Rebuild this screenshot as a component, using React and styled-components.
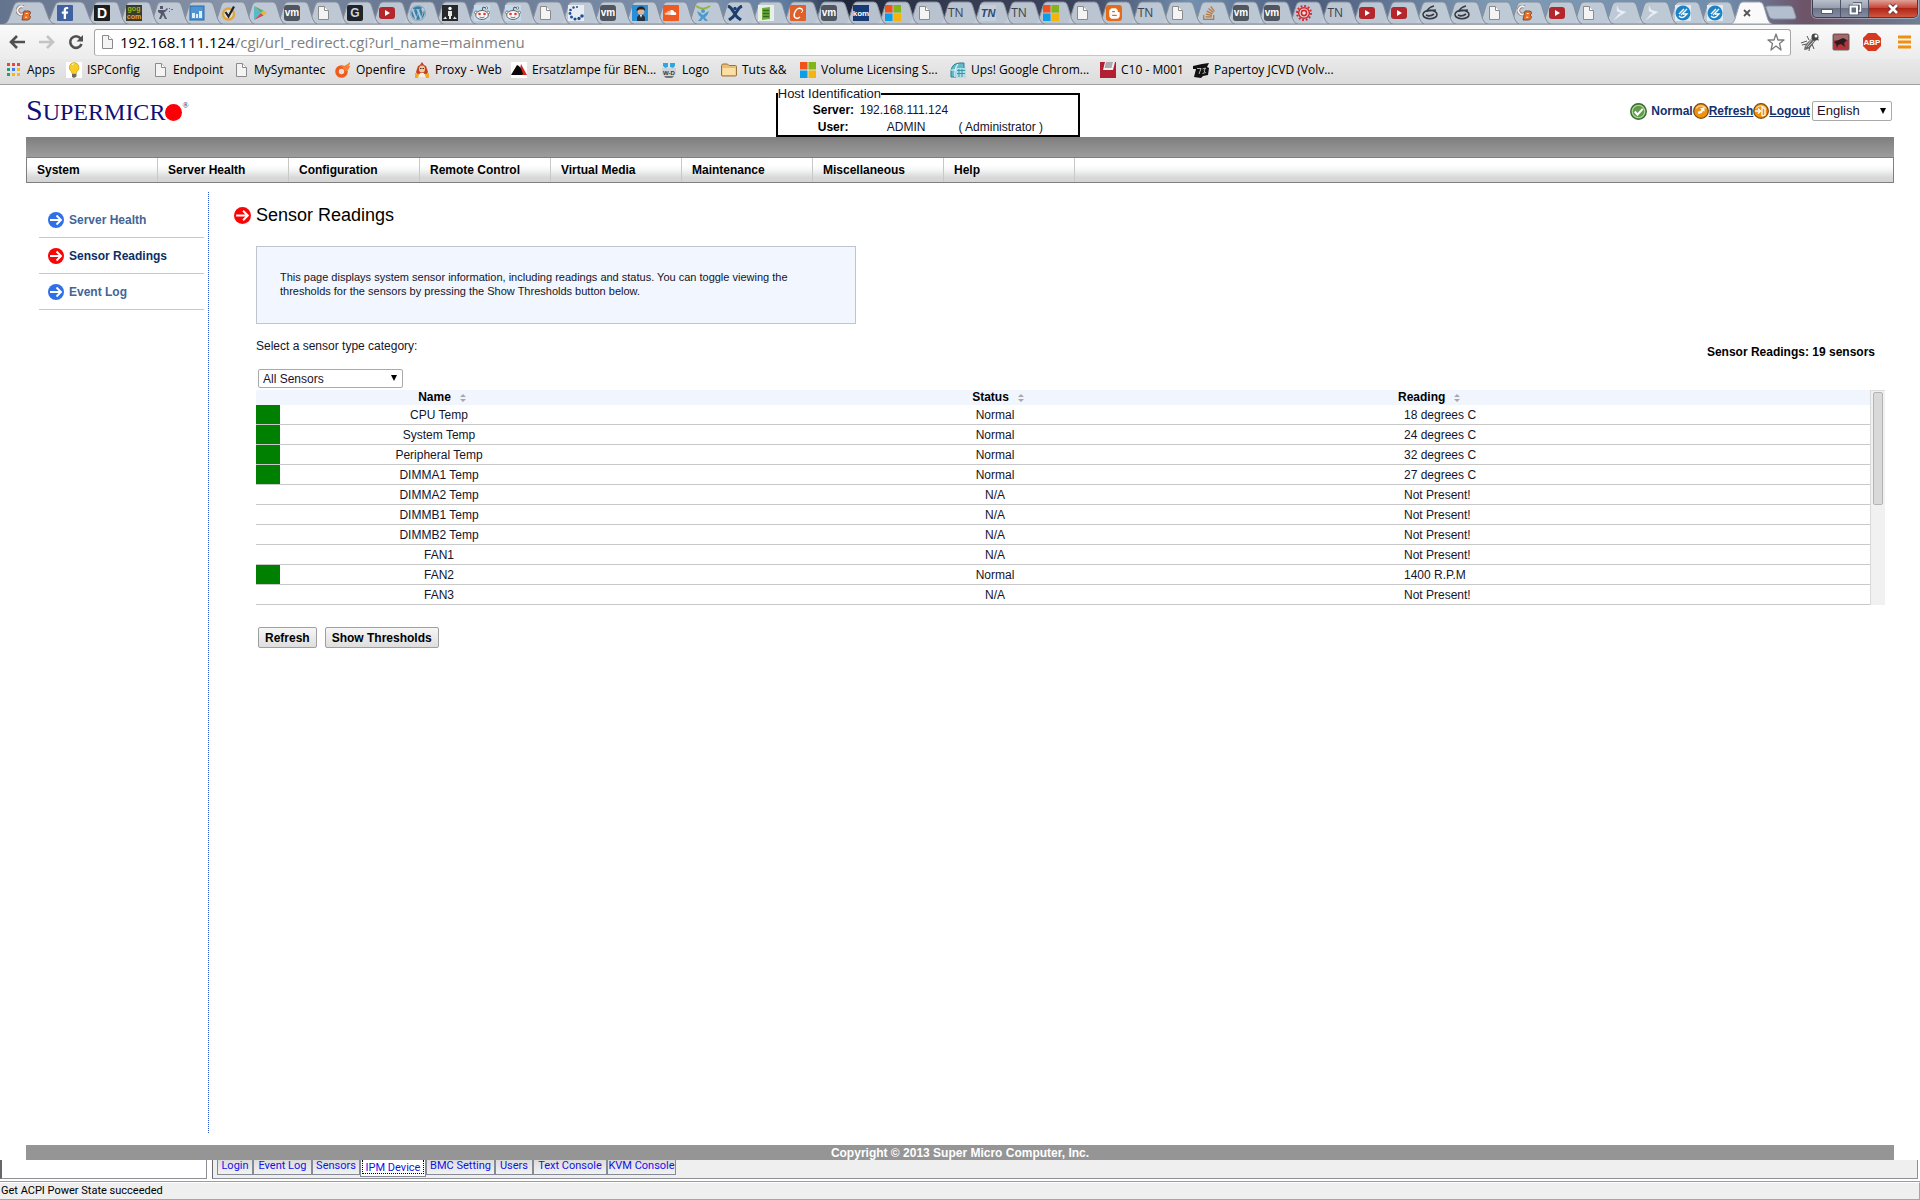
import { useState } from "react";
import styled, { createGlobalStyle } from "styled-components";
import {
  FaFacebookF,
  FaWordpress,
  FaSoundcloud,
  FaBloggerB,
  FaStackOverflow,
} from "react-icons/fa";

const GlobalStyle = createGlobalStyle`
  * {
    box-sizing: border-box;
  }
  body {
    margin: 0;
    background: #ffffff;
    color: #000000;
    font-family: "Liberation Sans", Arial, sans-serif;
    font-size: 12px;
    line-height: 14px;
  }
  button, input, select {
    font: inherit;
    color: inherit;
  }
  svg {
    display: block;
    flex: none;
  }
`;

/* ---------- favicons ---------- */

const Icon = ({ size = 16, children }) => (
  <svg width={size} height={size} viewBox="0 0 16 16" aria-hidden="true">
    {children}
  </svg>
);

const PageIcon = () => (
  <Icon>
    <path d="M3.5 1.5h6l4 4v9h-10z" fill="#f4f4f4" stroke="#8b8b8b" />
    <path d="M9.5 1.5v4h4" fill="#fff" stroke="#8b8b8b" />
  </Icon>
);

const LetterIcon = ({ bg, color = "#fff", text, size = 10, radius = 2, y = 11, slant }) => (
  <Icon>
    <rect width="16" height="16" rx={radius} fill={bg} />
    <text
      x="8"
      y={y}
      fill={color}
      fontFamily="Liberation Sans"
      fontWeight="bold"
      fontStyle={slant ? "italic" : "normal"}
      fontSize={size}
      textAnchor="middle"
    >
      {text}
    </text>
  </Icon>
);

const TileIcon = ({ bg, color = "#fff", glyph: Glyph, size = 12, radius = 1 }) => (
  <Icon>
    <rect width="16" height="16" rx={radius} fill={bg} />
    <Glyph x={8 - size / 2} y={8 - size / 2} width={size} height={size} color={color} />
  </Icon>
);

const CbIcon = () => (
  <Icon>
    <path d="M7.500 2A4 4 0 1 0 8 8.500" fill="none" stroke="#8d7f80" strokeWidth="3.600" />
    <path d="M7.500 2A4 4 0 1 0 8 8.500" fill="none" stroke="#f6efec" strokeWidth="1.800" />
    <path
      d="M8 6h4.500q2.400.2 2 2.300-.3 1.200-1.400 1.700 1.600.8 1.200 2.600-.5 2.400-3 2.400H6z"
      fill="#e4712a"
      stroke="#85411f"
      strokeWidth=".9"
    />
    <path d="M9.800 8.500h1.900M9.200 12.200h1.900" stroke="#fff" strokeWidth="1.100" />
  </Icon>
);

const RedditIcon = () => (
  <Icon>
    <rect width="16" height="16" fill="#c3d9ee" />
    <path d="M8 6l1-4 3 1" fill="none" stroke="#555" />
    <circle cx="12.500" cy="3" r="1.200" fill="#fff" stroke="#555" strokeWidth=".7" />
    <circle cx="2" cy="7.500" r="1.500" fill="#fff" stroke="#555" strokeWidth=".7" />
    <circle cx="14" cy="7.500" r="1.500" fill="#fff" stroke="#555" strokeWidth=".7" />
    <ellipse cx="8" cy="10" rx="6.300" ry="4.500" fill="#f7f7f7" stroke="#555" strokeWidth=".9" />
    <circle cx="5.500" cy="9" r="1.300" fill="#e0382b" />
    <circle cx="10.500" cy="9" r="1.300" fill="#e0382b" />
    <path d="M5.500 12q2.500 1.500 5 0" fill="none" stroke="#555" strokeWidth=".8" />
  </Icon>
);

const GogIcon = () => (
  <Icon>
    <rect width="16" height="16" fill="#3a3b2e" />
    <g fontFamily="Liberation Sans" fontWeight="bold" fontSize="7" textAnchor="middle">
      <text x="8" y="6" fill="#a6b51d">gog</text>
      <text x="8" y="14" fill="#e0a92e">com</text>
    </g>
  </Icon>
);

const SoldierIcon = () => (
  <Icon>
    <path
      d="M3 1h3v3H3zM1 5h7l2-2 1 1-3 3H7l1 3 2 4H8l-2-4-2 4H2l2-5-3-2z"
      fill="#55586b"
    />
    <path d="M12 3h1v1h-1zM14 4h2v1h-2zM12 6h1v1h-1z" fill="#c44" />
  </Icon>
);

const ChartIcon = () => (
  <Icon>
    <rect x="1" y="1" width="14" height="14" fill="#4f94d2" stroke="#2c69a5" />
    <path d="M3 13V8h3v5zM7 13V9h2v4zM10 13V6h3v7z" fill="#dceefa" />
  </Icon>
);

const CheckRingIcon = () => (
  <Icon>
    <circle cx="7.5" cy="9" r="5.5" fill="#dce1e6" stroke="#e0a63a" strokeWidth="2.4" />
    <path d="M4.5 7l3 4.5L13 1.5" fill="none" stroke="#222" strokeWidth="2.2" />
  </Icon>
);

const PlayStoreIcon = () => (
  <Icon>
    <path d="M2 1v14l7-7z" fill="#58b9c9" />
    <path d="M2 1l7 7 2.5-2.5z" fill="#5fae70" />
    <path d="M2 15l7-7 2.5 2.5z" fill="#cd4a5c" />
    <path d="M11.5 5.500L15 8l-3.500 2.500L9 8z" fill="#e7b43e" />
  </Icon>
);

const YoutubeIcon = () => (
  <Icon>
    <rect y="2" width="16" height="12" rx="3" fill="#b3262b" />
    <path d="M6 5v6l5-3z" fill="#fff" />
  </Icon>
);

const PersonIcon = () => (
  <Icon>
    <rect width="16" height="16" fill="#26282c" />
    <circle cx="8" cy="3.500" r="1.700" fill="#fff" />
    <path d="M6 6h4v5H9v3H7v-3H6zM1 14l2.500-2.500L5 14zM15 14l-2.500-2.500L11 14z" fill="#e6e6e6" />
  </Icon>
);

const DotsIcon = () => (
  <Icon>
    <rect width="16" height="16" fill="#e9edf2" />
    <g fill="#204f9c">
      <circle cx="9" cy="2" r="1" />
      <circle cx="5.500" cy="2.500" r="1.200" />
      <circle cx="2.500" cy="5" r="1.300" />
      <circle cx="2" cy="8.500" r="1.400" />
      <circle cx="3.500" cy="12" r="1.500" />
      <circle cx="7" cy="14" r="1.600" />
      <circle cx="11" cy="13.500" r="1.700" />
      <circle cx="14" cy="11" r="1.800" />
    </g>
  </Icon>
);

const BoyIcon = () => (
  <Icon>
    <rect width="16" height="16" fill="#2b8fd8" />
    <path d="M5 16v-4l2-2h4l2 2v4z" fill="#26323f" />
    <circle cx="9" cy="6.500" r="3.300" fill="#e3b293" />
    <path d="M4.500 6q0-4.500 4.500-4.500T13 6l-1.500-1.500H7.500z" fill="#2a211f" />
    <path d="M8 10h2l-1 3z" fill="#fff" />
  </Icon>
);

const JiraIcon = () => (
  <Icon>
    <path d="M1 1q7 5 14 0" fill="none" stroke="#8fb53a" strokeWidth="1.700" />
    <circle cx="8" cy="6" r="2" fill="#4c9bd0" />
    <path d="M2 6q4 2 6 4 2-2 6-4-1 4-4 6.500l3 3.500H10L8 13.500 6 16H3l3-3.500Q3 10 2 6z" fill="#4c9bd0" />
  </Icon>
);

const XManIcon = () => (
  <Icon>
    <path d="M1 1q3 1 5 5l4 6 4 3M15 1q-3 1-5 5l-4 6-4 3" fill="none" stroke="#1d3f70" strokeWidth="3" />
    <circle cx="8" cy="3.500" r="1.700" fill="#1d3f70" />
  </Icon>
);

const ServerIcon = () => (
  <Icon>
    <rect width="16" height="16" fill="#e8efe4" />
    <path d="M4 3l8-1v12l-8 1z" fill="#6fae3c" />
    <path d="M5 5.500h6M5 8.500h6M5 11.500h6" stroke="#2f6b1f" strokeWidth="1.300" />
  </Icon>
);

const SwirlIcon = () => (
  <Icon>
    <rect width="16" height="16" rx="1" fill="#e0602a" />
    <path d="M12.500 4.500Q8 1.500 5.500 6T5 12.500Q7 14.500 10 12" fill="none" stroke="#fff" strokeWidth="1.500" />
    <path d="M12.500 4.500Q13 7 11 8" fill="none" stroke="#fff" />
  </Icon>
);

const WindowsIcon = () => (
  <Icon>
    <path d="M0 0h7.500v7.500H0z" fill="#f1511b" />
    <path d="M8.500 0H16v7.500H8.500z" fill="#80b615" />
    <path d="M0 8.500h7.500V16H0z" fill="#0b9fe8" />
    <path d="M8.500 8.500H16V16H8.500z" fill="#f5b40c" />
  </Icon>
);

const GearIcon = () => (
  <Icon>
    <circle cx="8" cy="8" r="7" fill="none" stroke="#d0282c" strokeWidth="2" strokeDasharray="1.800 1.865" />
    <circle cx="8" cy="8" r="5.300" fill="#e9e4e8" stroke="#d0282c" strokeWidth="1.500" />
    <circle cx="8" cy="8" r="2.600" fill="none" stroke="#d0282c" strokeWidth="1.600" />
  </Icon>
);

const RingIcon = () => (
  <Icon>
    <ellipse cx="8" cy="9.500" rx="7" ry="4.300" fill="none" stroke="#363b41" strokeWidth="1.600" />
    <path d="M12 1Q7 2 5 6l9-1M4 10q4 2 8-1" fill="none" stroke="#363b41" strokeWidth="1.700" />
  </Icon>
);

const BoltIcon = () => (
  <Icon>
    <path d="M5 1l2 4 7 2-5 3-7 5 4-5 3-2-4-2z" fill="#eef1f4" stroke="#dde2e8" strokeWidth=".5" />
  </Icon>
);

const BlueHandIcon = () => (
  <Icon>
    <rect width="16" height="16" fill="#dfeaf3" />
    <circle cx="8" cy="8" r="7.500" fill="#1c82c4" />
    <path d="M4 9l5-5M6 10l6-6M4 11q3 3 6 0l2-2H8" fill="none" stroke="#fff" strokeWidth="1.300" />
  </Icon>
);

const AppsIcon = () => (
  <Icon>
    <path d="M1 1h3v3H1zM6 1h3v3H6zM11 1h3v3h-3z" fill="#e8453c" />
    <path d="M1 6h3v3H1zM1 11h3v3H1z" fill="#1fa463" />
    <path d="M6 6h3v3H6z" fill="#3b7ded" />
    <path d="M6 11h3v3H6zM11 6h3v3h-3zM11 11h3v3h-3z" fill="#f9b51e" />
  </Icon>
);

const BulbIcon = () => (
  <Icon>
    <rect width="16" height="16" fill="#fff" />
    <path d="M8 0.500a5 5 0 0 1 3 9l-.6 2H6l-.7-2A5 5 0 0 1 8 .5z" fill="#f7cf23" stroke="#c9920f" strokeWidth=".6" />
    <path d="M6 12h4.500v2.500L8 16l-2-1z" fill="#6d6a5e" />
    <path d="M6 3q1-1.500 2-1.200" stroke="#fffbd0" fill="none" strokeWidth="1.200" />
  </Icon>
);

const OpenfireIcon = () => (
  <Icon>
    <circle cx="6.500" cy="9.500" r="4.500" fill="none" stroke="#f15a1f" strokeWidth="3.600" />
    <path d="M6 4q4 1 9-4 .5 2-1.500 4 1.500 0 2-.5-1 3.500-4.500 6z" fill="#f58233" />
  </Icon>
);

const ProxyIcon = () => (
  <Icon>
    <path d="M8 0l2 3 2 1 1 3 1 3-1 2H3L2 10l1-3 1-3 2-1z" fill="#c9401c" />
    <ellipse cx="8" cy="7" rx="3" ry="3.500" fill="#f6c8a0" />
    <path d="M1 11l4 1-1 4H1zM15 11l-4 1 1 4h3z" fill="#f5a623" />
    <path d="M5 15l1-4h4l1 4z" fill="#f8efe4" />
    <path d="M6 6.500h1.500M8.500 6.500H10" stroke="#333" />
  </Icon>
);

const LampIcon = () => (
  <Icon>
    <rect width="16" height="16" fill="#fff" />
    <path d="M10 2l6 11H8z" fill="#d5281f" />
    <path d="M6 3q4 1 6 9l-1 1H0z" fill="#0a0a0a" />
  </Icon>
);

const WdIcon = () => (
  <Icon>
    <path d="M2 1h5v4l-3 1-2-2zM9 1h5v3l-2 2-3-1z" fill="#2ba9e0" />
    <path d="M1 6h14v6l-3 4H4l-3-4z" fill="#cfd3d6" />
    <path d="M3 14h10l-2 2H5z" fill="#6f777e" />
    <text x="8" y="12.500" fontFamily="Liberation Sans" fontWeight="bold" fontSize="6" fill="#333" textAnchor="middle">
      W-D
    </text>
  </Icon>
);

const FolderIcon = () => (
  <Icon>
    <path d="M.5 3.500l1-1.500h5l1.500 1.500h6.500q1 0 1 1V13q0 1-1 1h-13q-1 0-1-1z" fill="#e8bd74" stroke="#9b743a" />
    <path d="M1.500 6h13v7h-13z" fill="#fbdfa4" />
  </Icon>
);

const GlobeIcon = () => (
  <Icon>
    <path d="M1 15V9q1-8 9-8h4v14z" fill="#63b9cb" stroke="#2e7f93" />
    <path d="M1 8h7M8 2q-4 5-3 13" fill="none" stroke="#e6f7fa" strokeWidth="1.200" />
    <rect x="6" y="6" width="10" height="10" fill="#aee0ea" />
    <path d="M7 8.500h8M7 11.500h8M9 7v8M12 7v8" stroke="#3c93a6" />
  </Icon>
);

const C10Icon = () => (
  <Icon>
    <rect width="16" height="16" fill="#b21f33" />
    <path d="M5 0h10l-2 8H3z" fill="#f3f3f3" />
    <path d="M6 0h7l-1.500 6h-7z" fill="#a9acb0" />
  </Icon>
);

const PapertoyIcon = () => (
  <Icon>
    <path d="M0 4l9-2 7-1-2 4 2 1-1 7-5 1-2 2-7-1 2-8H0z" fill="#111" />
    <path d="M4 6.500h4L6 12M9.500 7l3-1-1.500 3 1.500 1.500-3 1" stroke="#ddd" fill="none" strokeWidth=".8" />
  </Icon>
);

const vm = <LetterIcon bg="#4f5660" text="vm" radius={3} />;
const page = <PageIcon />;
const youtube = <YoutubeIcon />;
const windows = <WindowsIcon />;

const tabs = [
  <CbIcon />,
  <TileIcon bg="#41609f" glyph={FaFacebookF} />,
  <LetterIcon bg="#1d1d1d" text="D" size={14} y={13} radius={1} />,
  <GogIcon />,
  <SoldierIcon />,
  <ChartIcon />,
  <CheckRingIcon />,
  <PlayStoreIcon />,
  vm,
  page,
  <LetterIcon bg="#202428" text="G" color="#cfd4d8" size={12} y={12} />,
  youtube,
  <FaWordpress size={16} color="#3580a8" />,
  <PersonIcon />,
  <RedditIcon />,
  <RedditIcon />,
  page,
  <DotsIcon />,
  vm,
  <BoyIcon />,
  <TileIcon bg="#ef5a23" glyph={FaSoundcloud} size={13} />,
  <JiraIcon />,
  <XManIcon />,
  <ServerIcon />,
  <SwirlIcon />,
  vm,
  <LetterIcon bg="#153a75" text="kom" size={8} radius={0} />,
  windows,
  page,
  "TN",
  <LetterIcon bg="#c5cfda" color="#2d4a72" text="TN" size={11} radius={0} y={12} slant />,
  "TN",
  windows,
  page,
  <TileIcon bg="#e36c1c" glyph={FaBloggerB} size={11} radius={3} />,
  "TN",
  page,
  <FaStackOverflow size={16} color="#b8783a" />,
  vm,
  vm,
  <GearIcon />,
  "TN",
  youtube,
  youtube,
  <RingIcon />,
  <RingIcon />,
  page,
  <CbIcon />,
  youtube,
  page,
  <BoltIcon />,
  <BoltIcon />,
  <BlueHandIcon />,
  <BlueHandIcon />,
];

/* ---------- browser window ---------- */

const TabStrip = styled.div`
  display: flex;
  height: 24px;
  padding-left: 4px;
  background: linear-gradient(
    90deg,
    #64738e 0%,
    #8793a8 12%,
    #64748f 22%,
    #7f93ae 36%,
    #5d7ba0 41%,
    #20263a 44%,
    #363c52 50%,
    #3c435c 56%,
    #7390b0 62%,
    #4a5a7a 68%,
    #7f9bb6 78%,
    #6f8cab 90%,
    #6d5367 94%,
    #6d7f96 100%
  );
`;

const Tab = styled.div`
  display: grid;
  flex: ${(p) => (p.$wide ? "0 0 41px" : "1 1 0")};
  min-width: 0;
  z-index: ${(p) => p.$layer};
  > * {
    grid-area: 1 / 1;
  }
`;

const TabShape = styled.svg`
  width: calc(100% + 10px);
  height: 24px;
`;

const TabContent = styled.span`
  align-self: center;
  padding: 2px 0 0 ${(p) => (p.$wide ? "12px" : "8px")};
  color: #3c414a;
  font: 12px/16px "Open Sans", sans-serif;
  z-index: 1;
`;

const CloseTab = styled.button`
  padding: 0;
  border: 0;
  background: none;
  display: grid;
  place-items: center;
  width: 16px;
  height: 16px;
`;

const StripEnd = styled.div`
  display: flex;
  justify-content: space-between;
  width: 158px;
  padding: 0 2px 0 3px;
`;

const NewTab = styled.button`
  margin-top: 5px;
  padding: 0;
  border: 0;
  background: none;
  height: 16px;
`;

const WindowButtons = styled.div`
  display: flex;
  height: 18px;
  border: 1px solid #39404f;
  border-top: 0;
  border-radius: 0 0 5px 5px;
  box-shadow: 0 0 0 1px rgba(255, 255, 255, 0.35);
  overflow: hidden;
`;

const WindowButton = styled.button`
  display: grid;
  place-items: center;
  width: ${(p) => (p.$close ? "48px" : "28px")};
  padding: 0;
  border: 0;
  border-right: ${(p) => (p.$close ? "0" : "1px solid #4b5365")};
  background: ${(p) =>
    p.$close
      ? "linear-gradient(#e0a197, #c5493a 45%, #b02517 50%, #d0573f)"
      : "linear-gradient(#b9bfca, #98a0af 45%, #6d7488 50%, #848ca2)"};
`;

const Toolbar = styled.div`
  display: flex;
  align-items: center;
  height: 35px;
  padding: 0 8px;
  border-top: 1px solid #a3a8ae;
  background: linear-gradient(#fafafa, #ececec);
`;

const NavButton = styled.button`
  padding: 0;
  border: 0;
  background: none;
  margin-right: ${(p) => p.$gap}px;
`;

const Omnibox = styled.div`
  flex: 1;
  display: flex;
  align-items: center;
  height: 27px;
  padding: 0 5px 0 4px;
  background: #ffffff;
  border: 1px solid #a6a6a6;
  border-bottom-color: #c6c6c6;
  border-radius: 3px;
`;

const Address = styled.div`
  flex: 1;
  padding-left: 5px;
  color: #808080;
  font: 15px/20px "Open Sans", sans-serif;
  b {
    font-weight: 400;
    color: #000000;
  }
`;

const Extensions = styled.div`
  display: flex;
  align-items: center;
  gap: 12px;
  padding-left: 9px;
`;

const Bookmarks = styled.nav`
  display: flex;
  align-items: center;
  height: 26px;
  padding: 0 0 3px 6px;
  border-bottom: 1px solid #a0a0a0;
  background: linear-gradient(#e9e9e9, #dcdcdc);
`;

const Bookmark = styled.a`
  display: flex;
  align-items: center;
  gap: 5px;
  flex: none;
  width: ${(p) => p.$width}px;
  color: #000000;
  font: 12px/16px "Open Sans", sans-serif;
  text-decoration: none;
  white-space: nowrap;
`;

const bookmarks = [
  { label: "Apps", width: 60, icon: <AppsIcon /> },
  { label: "ISPConfig", width: 86, icon: <BulbIcon /> },
  { label: "Endpoint", width: 81, icon: page },
  { label: "MySymantec", width: 102, icon: page },
  { label: "Openfire", width: 79, icon: <OpenfireIcon /> },
  { label: "Proxy - Web", width: 97, icon: <ProxyIcon /> },
  { label: "Ersatzlampe für BEN...", width: 150, icon: <LampIcon /> },
  { label: "Logo", width: 60, icon: <WdIcon /> },
  { label: "Tuts &&", width: 79, icon: <FolderIcon /> },
  { label: "Volume Licensing S...", width: 150, icon: windows },
  { label: "Ups! Google Chrom...", width: 150, icon: <GlobeIcon /> },
  { label: "C10 - M001", width: 93, icon: <C10Icon /> },
  { label: "Papertoy JCVD (Volv...", width: 150, icon: <PapertoyIcon /> },
];

const Shape = ({ active }) => (
  <TabShape viewBox="0 0 42 24" preserveAspectRatio="none" aria-hidden="true">
    <path
      d="M0 24Q3 23 4 19L8 6Q9 2 12 2H29Q32 2 33 6L37 19Q39 24 42 24z"
      fill={active ? "#fafafa" : "rgba(196,205,217,.93)"}
      stroke={active ? "#9aa2ad" : "#858d99"}
      vectorEffect="non-scaling-stroke"
    />
  </TabShape>
);

function Browser() {
  return (
    <header>
      <TabStrip>
        {tabs.map((content, i) => (
          <Tab key={i} $wide={i < 2} $layer={tabs.length - i}>
            <Shape />
            <TabContent $wide={i < 2}>{content}</TabContent>
          </Tab>
        ))}
        <Tab $layer={tabs.length + 1}>
          <Shape active />
          <TabContent>
            <CloseTab aria-label="Close tab">
              <svg width="8" height="8" viewBox="0 0 8 8">
                <path d="M1 1l6 6M7 1L1 7" stroke="#555" strokeWidth="1.800" />
              </svg>
            </CloseTab>
          </TabContent>
        </Tab>
        <StripEnd>
          <NewTab aria-label="New tab">
            <svg width="32" height="16" viewBox="0 0 32 16">
              <path d="M1 3Q0 1 3 1h22q2 0 3 2l3 9q0 2-2 2H8q-3 0-4-3z" fill="#b3bfcf" stroke="#8490a3" />
            </svg>
          </NewTab>
          <WindowButtons>
            <WindowButton aria-label="Minimize">
              <svg width="14" height="12" viewBox="0 0 14 12">
                <rect x="1.500" y="6.500" width="11" height="4" fill="#fff" stroke="#555d6e" />
              </svg>
            </WindowButton>
            <WindowButton aria-label="Restore">
              <svg width="14" height="14" viewBox="0 0 14 14">
                <path d="M5 2h7.500v7H10" fill="none" stroke="#454c5d" strokeWidth="3.400" />
                <path d="M5 2h7.500v7H10" fill="none" stroke="#fff" strokeWidth="1.700" />
                <rect x="2.500" y="4.500" width="6.500" height="7" fill="#666e80" stroke="#454c5d" strokeWidth="3.400" />
                <rect x="2.500" y="4.500" width="6.500" height="7" fill="#666e80" stroke="#fff" strokeWidth="2" />
              </svg>
            </WindowButton>
            <WindowButton $close aria-label="Close">
              <svg width="14" height="12" viewBox="0 0 14 12">
                <path d="M3 2l8 8M11 2l-8 8" stroke="#5c2a2a" strokeWidth="4.500" />
                <path d="M3 2l8 8M11 2l-8 8" stroke="#fff" strokeWidth="2.800" />
              </svg>
            </WindowButton>
          </WindowButtons>
        </StripEnd>
      </TabStrip>
      <Toolbar>
        <NavButton $gap={12} aria-label="Back">
          <svg width="18" height="16" viewBox="0 0 18 16">
            <path d="M9 2L3 8l6 6M3 8h14" fill="none" stroke="#505050" strokeWidth="2.600" />
          </svg>
        </NavButton>
        <NavButton $gap={12} aria-label="Forward">
          <svg width="18" height="16" viewBox="0 0 18 16">
            <path d="M9 2l6 6-6 6M15 8H1" fill="none" stroke="#c4c4c4" strokeWidth="2.600" />
          </svg>
        </NavButton>
        <NavButton $gap={10} aria-label="Reload">
          <svg width="16" height="16" viewBox="0 0 16 16">
            <path d="M12.500 4.300A5.800 5.800 0 1 0 13.500 10" fill="none" stroke="#505050" strokeWidth="2.600" />
            <path d="M15 1v6.500H8.500z" fill="#505050" />
          </svg>
        </NavButton>
        <Omnibox>
          <PageIcon />
          <Address>
            <b>192.168.111.124</b>/cgi/url_redirect.cgi?url_name=mainmenu
          </Address>
          <svg width="18" height="18" viewBox="0 0 18 18" aria-hidden="true">
            <path
              d="M9 1l2 6h6l-4.500 3.500L14 17l-5-4-5 4 1.500-6.500L1 7h6z"
              fill="#fff"
              stroke="#7c7c7c"
              strokeWidth="1.300"
              strokeLinejoin="round"
            />
          </svg>
        </Omnibox>
        <Extensions>
          <svg width="20" height="20" viewBox="0 0 20 20" aria-hidden="true">
            <path d="M7 9L1 11M7 12l-5 1M10 13l-1 6M12 12l2 5M9 8L7 4M13 6l0-4M14 7l5 1" stroke="#555" fill="none" />
            <path d="M13 5l3 3-6 8q-3 2-6 2 0-4 3-7z" fill="#6b6b6b" />
            <path d="M12 7l-6 8M14 9l-6 6" stroke="#d5d5d5" strokeWidth=".8" />
            <circle cx="15" cy="5" r="3.500" fill="#444" />
            <circle cx="16" cy="4" r="1.500" fill="#fff" />
          </svg>
          <svg width="18" height="18" viewBox="0 0 18 18" aria-hidden="true">
            <rect x="1" y="1" width="16" height="16" rx="1" fill="#b53238" stroke="#666" />
            <path d="M2 2h14v5H2z" fill="#9b6c6c" />
            <path d="M2 9l9-4 4 2-3 3 1 4-4-3-3 1-1 3-1-4z" fill="#2b1b1c" />
          </svg>
          <svg width="20" height="20" viewBox="0 0 20 20" aria-hidden="true">
            <path d="M6 1h8l5 5v8l-5 5H6l-5-5V6z" fill="#d6391d" />
            <text x="10" y="13" fontFamily="Liberation Sans" fontWeight="bold" fontSize="8" fill="#fff" textAnchor="middle">
              ABP
            </text>
          </svg>
          <svg width="18" height="14" viewBox="0 0 18 14" aria-hidden="true">
            <path d="M4 2h13M4 7h13M4 12h13" stroke="#f09010" strokeWidth="3" />
          </svg>
        </Extensions>
      </Toolbar>
      <Bookmarks>
        {bookmarks.map(({ label, width, icon }) => (
          <Bookmark key={label} href="#" $width={width}>
            {icon}
            {label}
          </Bookmark>
        ))}
      </Bookmarks>
    </header>
  );
}

/* ---------- IPMI page ---------- */

const Screen = styled.div`
  display: flex;
  flex-direction: column;
  min-height: 100vh;
`;

const Masthead = styled.div`
  display: grid;
  grid-template-columns: 48fr 304px 52fr;
  height: 52px;
  padding: 0 28px 0 26px;
`;

const Logo = styled.div`
  display: flex;
  align-items: baseline;
  align-self: center;
  color: #10107a;
  font: 24px/28px "Liberation Serif", serif;
`;

const LogoInitial = styled.span`
  font-size: 30px;
`;

const LogoDot = styled.svg`
  align-self: center;
  margin-top: 2px;
`;

const Registered = styled.span`
  align-self: flex-start;
  font-size: 8px;
  line-height: 20px;
`;

const HostBox = styled.fieldset`
  margin: 0;
  padding: 0;
  height: 52px;
  min-width: 0;
  border: 2px solid #000000;
  color: #14142a;
  legend {
    padding: 0;
    font-size: 13px;
    line-height: 17px;
  }
`;

const HostRow = styled.dl`
  display: flex;
  margin: 0;
  line-height: 17px;
  dt {
    width: 80px;
    padding-left: ${(p) => (p.$user ? "40px" : "35px")};
    font-weight: bold;
    color: #000000;
  }
  dd {
    margin: 0 0 0 ${(p) => (p.$user ? "29px" : "2px")};
  }
  dd + dd {
    margin-left: 33px;
  }
`;

const Session = styled.div`
  display: flex;
  align-items: center;
  justify-content: flex-end;
  height: 52px;
  color: #14306e;
  font-weight: bold;
  a {
    color: inherit;
  }
`;

const Health = styled.span`
  padding-left: 4px;
`;

const SelectWrap = styled.span`
  display: inline-grid;
  align-items: center;
  width: ${(p) => p.$width}px;
  margin-left: 2px;
  font-size: ${(p) => p.$size}px;
  font-weight: normal;
  > * {
    grid-area: 1 / 1;
  }
  select {
    appearance: none;
    width: 100%;
    height: ${(p) => p.$height}px;
    padding: 0 4px;
    border: 1px solid #a9a9a9;
    border-radius: 2px;
    background: #ffffff;
    color: #1c1030;
  }
  svg {
    justify-self: end;
    margin-right: 5px;
    pointer-events: none;
  }
`;

const Band = styled.div`
  height: 20px;
  margin: 0 26px;
  background: linear-gradient(#7e7e7e, #9d9d9d);
`;

const Menu = styled.nav`
  display: flex;
  height: 26px;
  margin: 0 26px;
  border: 1px solid #7f7f7f;
  background: linear-gradient(#ffffff 30%, #f4f5f5 50%, #d8d9d9 80%, #d4d4d4);
`;

const MenuLink = styled.a`
  width: 131px;
  padding-left: 10px;
  border-right: 1px solid #c8c8c8;
  color: #000000;
  font-weight: bold;
  line-height: 24px;
  text-decoration: none;
`;

const Body = styled.div`
  flex: 1;
  display: flex;
  padding: 9px 35px 12px 39px;
`;

const Sidebar = styled.nav`
  width: 170px;
  padding: 10px 4px 0 0;
  border-right: 1px dotted #2a52d8;
`;

const SideLink = styled.a`
  display: flex;
  align-items: center;
  gap: 5px;
  height: 36px;
  padding-left: 9px;
  border-bottom: 1px solid #c9c9c9;
  color: ${(p) => (p.$active ? "#0d2f63" : "#426596")};
  font-weight: bold;
  text-decoration: none;
`;

const Main = styled.main`
  flex: 1;
  min-width: 0;
  padding: 13px 0 0 25px;
`;

const Title = styled.h1`
  display: flex;
  align-items: center;
  gap: 5px;
  height: 20px;
  margin: 0;
  font-size: 18px;
  font-weight: normal;
`;

const Content = styled.div`
  padding-left: 22px;
`;

const Notice = styled.p`
  width: 600px;
  height: 78px;
  margin: 21px 0 0;
  padding: 23px;
  border: 1px solid #bfc5cf;
  background: #f1f6ff;
  color: #14142a;
  font-size: 11px;
  line-height: 14px;
`;

const Filter = styled.div`
  display: flex;
  justify-content: space-between;
  align-items: flex-start;
  padding: 15px 10px 0 0;
`;

const FilterLabel = styled.label`
  display: flex;
  flex-direction: column;
  gap: 16px;
  color: #14142a;
`;

const Count = styled.strong`
  margin-top: 6px;
`;

const TableArea = styled.div`
  display: flex;
  margin-top: 2px;
`;

const SensorTable = styled.table`
  flex: 1;
  table-layout: fixed;
  border-collapse: separate;
  border-spacing: 0;
  color: #14142a;
`;

const HeadRow = styled.tr`
  height: 15px;
  background: #f1f5fe;
  color: #000000;
  td {
    padding: 0;
  }
`;

const HeadCell = styled.th`
  padding: 0 0 0 6px;
`;

const HeadInner = styled.span`
  display: flex;
  align-items: center;
  justify-content: ${(p) => (p.$left ? "flex-start" : "center")};
  gap: 9px;
  height: 15px;
  line-height: 15px;
`;

const SensorRow = styled.tr`
  height: 20px;
  td {
    border-bottom: 1px solid #c9c9c9;
  }
`;

const Cell = styled.td`
  padding: 0 0 0 ${(p) => (p.$left ? "12px" : "0")};
  text-align: ${(p) => (p.$left ? "left" : "center")};
`;

const Lamp = styled.td`
  padding: 0;
  background: ${(p) => (p.$on ? "#008000" : "transparent")};
`;

const Scrollbar = styled.div`
  width: 15px;
  padding: 1px 2px;
  border-left: 1px solid #d9d9d9;
  border-top: 1px solid #dcdcdc;
  background: #f1f1f1;
`;

const Thumb = styled.div`
  width: 10px;
  height: 113px;
  border: 1px solid #b4b4b4;
  border-radius: 2px;
  background: #d9d9d9;
`;

const Actions = styled.div`
  display: flex;
  gap: 8px;
  padding: 22px 0 0 2px;
`;

const Button = styled.button`
  height: 21px;
  padding: 0 6px;
  border: 1px solid #9f9f9f;
  border-radius: 2px;
  background: linear-gradient(#f6f6f6, #dedede);
  font-weight: bold;
`;

const Copyright = styled.footer`
  height: 15px;
  margin: 0 26px;
  background: #959595;
  color: #ffffff;
  font-weight: bold;
  line-height: 16px;
  text-align: center;
`;

/* ---------- IPMIView window behind the page ---------- */

const ViewerBar = styled.div`
  display: flex;
  gap: 5px;
  height: 22px;
  padding: 0 2px 2px 0;
  border-bottom: 1px solid #9b9b9b;
`;

const TreePane = styled.div`
  width: 207px;
  border: 1px solid #8e8e96;
  border-left: 2px solid #66666c;
  border-top: 0;
`;

const ViewerTabs = styled.div`
  flex: 1;
  display: flex;
  align-items: flex-start;
  padding-left: 4px;
  border: 1px solid #8e8e96;
  border-top: 0;
  border-left: 1px solid #66666c;
  background: #efefef;
`;

const ViewerTab = styled.button`
  display: flex;
  align-items: flex-start;
  justify-content: center;
  width: ${(p) => p.$width}px;
  height: ${(p) => (p.$active ? "17px" : "15px")};
  padding: 0;
  border: 1px solid #858b96;
  border-top: 0;
  background: ${(p) => (p.$active ? "#ffffff" : "linear-gradient(#dcdcdc, #f2f2f2)")};
  color: #1212e6;
  font: 11px/11px Roboto, sans-serif;
  white-space: nowrap;
`;

const TabFocus = styled.span`
  flex: 1;
  height: 14px;
  margin: 0 1px;
  padding-top: 2px;
  border: 1px dotted #000000;
  border-top: 0;
`;

const StatusBar = styled.div`
  height: 18px;
  padding-left: 1px;
  border: 1px solid #a5a5a5;
  border-left: 0;
  border-top-color: #ffffff;
  background: #efefef;
  font: 11px/16px Roboto, sans-serif;
`;

const ArrowBadge = ({ color, size }) => (
  <Icon size={size}>
    <circle cx="8" cy="8" r="8" fill={color} />
    <path d="M2 8h10M8.500 3.500L13 8l-4.500 4.500" fill="none" stroke="#fff" strokeWidth="1.900" />
  </Icon>
);

const OrangeBadge = ({ children }) => (
  <Icon>
    <circle cx="8" cy="8" r="7.300" fill="#f0920f" stroke="#7d4b0b" strokeWidth="1.300" />
    <path d="M3 5.500a6 6 0 0 1 10 0" fill="none" stroke="#ffd28a" strokeWidth="1.200" />
    {children}
  </Icon>
);

const Caret = () => (
  <svg width="8" height="7" viewBox="0 0 8 7" aria-hidden="true">
    <path d="M1 0h6L4 6z" fill="#000" />
  </svg>
);

const SortIcon = () => (
  <svg width="6" height="8" viewBox="0 0 6 8" aria-hidden="true">
    <path d="M3 0l3 3H0zM3 8l3-3H0z" fill="#a8a8a8" />
  </svg>
);

const menu = [
  "System",
  "Server Health",
  "Configuration",
  "Remote Control",
  "Virtual Media",
  "Maintenance",
  "Miscellaneous",
  "Help",
];

const pages = ["Server Health", "Sensor Readings", "Event Log"];

const sensors = [
  ["CPU Temp", "Normal", "18 degrees C"],
  ["System Temp", "Normal", "24 degrees C"],
  ["Peripheral Temp", "Normal", "32 degrees C"],
  ["DIMMA1 Temp", "Normal", "27 degrees C"],
  ["DIMMA2 Temp", "N/A", "Not Present!"],
  ["DIMMB1 Temp", "N/A", "Not Present!"],
  ["DIMMB2 Temp", "N/A", "Not Present!"],
  ["FAN1", "N/A", "Not Present!"],
  ["FAN2", "Normal", "1400 R.P.M"],
  ["FAN3", "N/A", "Not Present!"],
];

const viewerTabs = [
  ["Login", 36],
  ["Event Log", 59],
  ["Sensors", 48],
  ["IPM Device", 66],
  ["BMC Setting", 69],
  ["Users", 38],
  ["Text Console", 74],
  ["KVM Console", 69],
];

function SensorReadings() {
  const [category, setCategory] = useState("All Sensors");

  return (
    <Main>
      <Title>
        <ArrowBadge color="#f80505" size={17} />
        Sensor Readings
      </Title>
      <Content>
        <Notice>
          This page displays system sensor information, including readings and
          status. You can toggle viewing the
          <br />
          thresholds for the sensors by pressing the Show Thresholds button
          below.
        </Notice>
        <Filter>
          <FilterLabel>
            Select a sensor type category:
            <SelectWrap $width={145} $height={19} $size={12}>
              <select value={category} onChange={(e) => setCategory(e.target.value)}>
                <option>All Sensors</option>
                <option>Temperature Sensors</option>
                <option>Voltage Sensors</option>
                <option>Fan Sensors</option>
              </select>
              <Caret />
            </SelectWrap>
          </FilterLabel>
          <Count>Sensor Readings: 19 sensors</Count>
        </Filter>
        <TableArea>
          <SensorTable>
            <colgroup>
              <col width="24" />
              <col width="318" />
              <col />
              <col width="478" />
            </colgroup>
            <thead>
              <HeadRow>
                <td />
                {["Name", "Status", "Reading"].map((head) => (
                  <HeadCell key={head}>
                    <HeadInner $left={head === "Reading"}>
                      {head}
                      <SortIcon />
                    </HeadInner>
                  </HeadCell>
                ))}
              </HeadRow>
            </thead>
            <tbody>
              {sensors.map(([name, status, reading]) => (
                <SensorRow key={name}>
                  <Lamp $on={status === "Normal"} />
                  <Cell>{name}</Cell>
                  <Cell>{status}</Cell>
                  <Cell $left>{reading}</Cell>
                </SensorRow>
              ))}
            </tbody>
          </SensorTable>
          <Scrollbar>
            <Thumb />
          </Scrollbar>
        </TableArea>
        <Actions>
          <Button>Refresh</Button>
          <Button>Show Thresholds</Button>
        </Actions>
      </Content>
    </Main>
  );
}

export default function App() {
  return (
    <Screen>
      <GlobalStyle />
      <Browser />
      <Masthead>
        <Logo>
          <LogoInitial>S</LogoInitial>
          UPERMICR
          <LogoDot width="17" height="17" viewBox="0 0 17 17" aria-hidden="true">
            <circle cx="8.500" cy="8.500" r="8.500" fill="#fb0007" />
          </LogoDot>
          <Registered>®</Registered>
        </Logo>
        <HostBox>
          <legend>Host Identification</legend>
          <HostRow>
            <dt>Server:</dt>
            <dd>192.168.111.124</dd>
          </HostRow>
          <HostRow $user>
            <dt>User:</dt>
            <dd>ADMIN</dd>
            <dd>( Administrator )</dd>
          </HostRow>
        </HostBox>
        <Session>
          <Icon size={17}>
            <circle cx="8" cy="8" r="7.300" fill="#5f9d4b" stroke="#3d6b35" strokeWidth="1.300" />
            <circle cx="8" cy="8" r="5.900" fill="none" stroke="#b9d9a6" />
            <path d="M4.500 8l2.500 3 5-5.500" fill="none" stroke="#fff" strokeWidth="2" />
          </Icon>
          <Health>Normal</Health>
          <OrangeBadge>
            <path d="M5 10.500q4 1 5-2.500l1.500.5V4L7 5.500l1.500 1Q8 8.500 5 8.500z" fill="#fff" />
          </OrangeBadge>
          <a href="#">Refresh</a>
          <OrangeBadge>
            <path d="M2 8h5M5 5.500L7.500 8 5 10.500M9 3v10M9 4l3 2v6l-3 1" fill="none" stroke="#fff" strokeWidth="1.300" />
          </OrangeBadge>
          <a href="#">Logout</a>
          <SelectWrap $width={80} $height={20} $size={13}>
            <select aria-label="Language" defaultValue="English">
              <option>English</option>
              <option>Deutsch</option>
            </select>
            <Caret />
          </SelectWrap>
        </Session>
      </Masthead>
      <Band />
      <Menu>
        {menu.map((item) => (
          <MenuLink key={item} href="#">
            {item}
          </MenuLink>
        ))}
      </Menu>
      <Body>
        <Sidebar>
          {pages.map((item) => {
            const active = item === "Sensor Readings";
            return (
              <SideLink key={item} href="#" $active={active}>
                <ArrowBadge color={active ? "#f80505" : "#2f6fe8"} size={16} />
                {item}
              </SideLink>
            );
          })}
        </Sidebar>
        <SensorReadings />
      </Body>
      <Copyright>Copyright © 2013 Super Micro Computer, Inc.</Copyright>
      <ViewerBar>
        <TreePane />
        <ViewerTabs>
          {viewerTabs.map(([label, width]) => {
            const active = label === "IPM Device";
            return (
              <ViewerTab key={label} $width={width} $active={active}>
                {active ? <TabFocus>{label}</TabFocus> : label}
              </ViewerTab>
            );
          })}
        </ViewerTabs>
      </ViewerBar>
      <StatusBar>Get ACPI Power State succeeded</StatusBar>
    </Screen>
  );
}
